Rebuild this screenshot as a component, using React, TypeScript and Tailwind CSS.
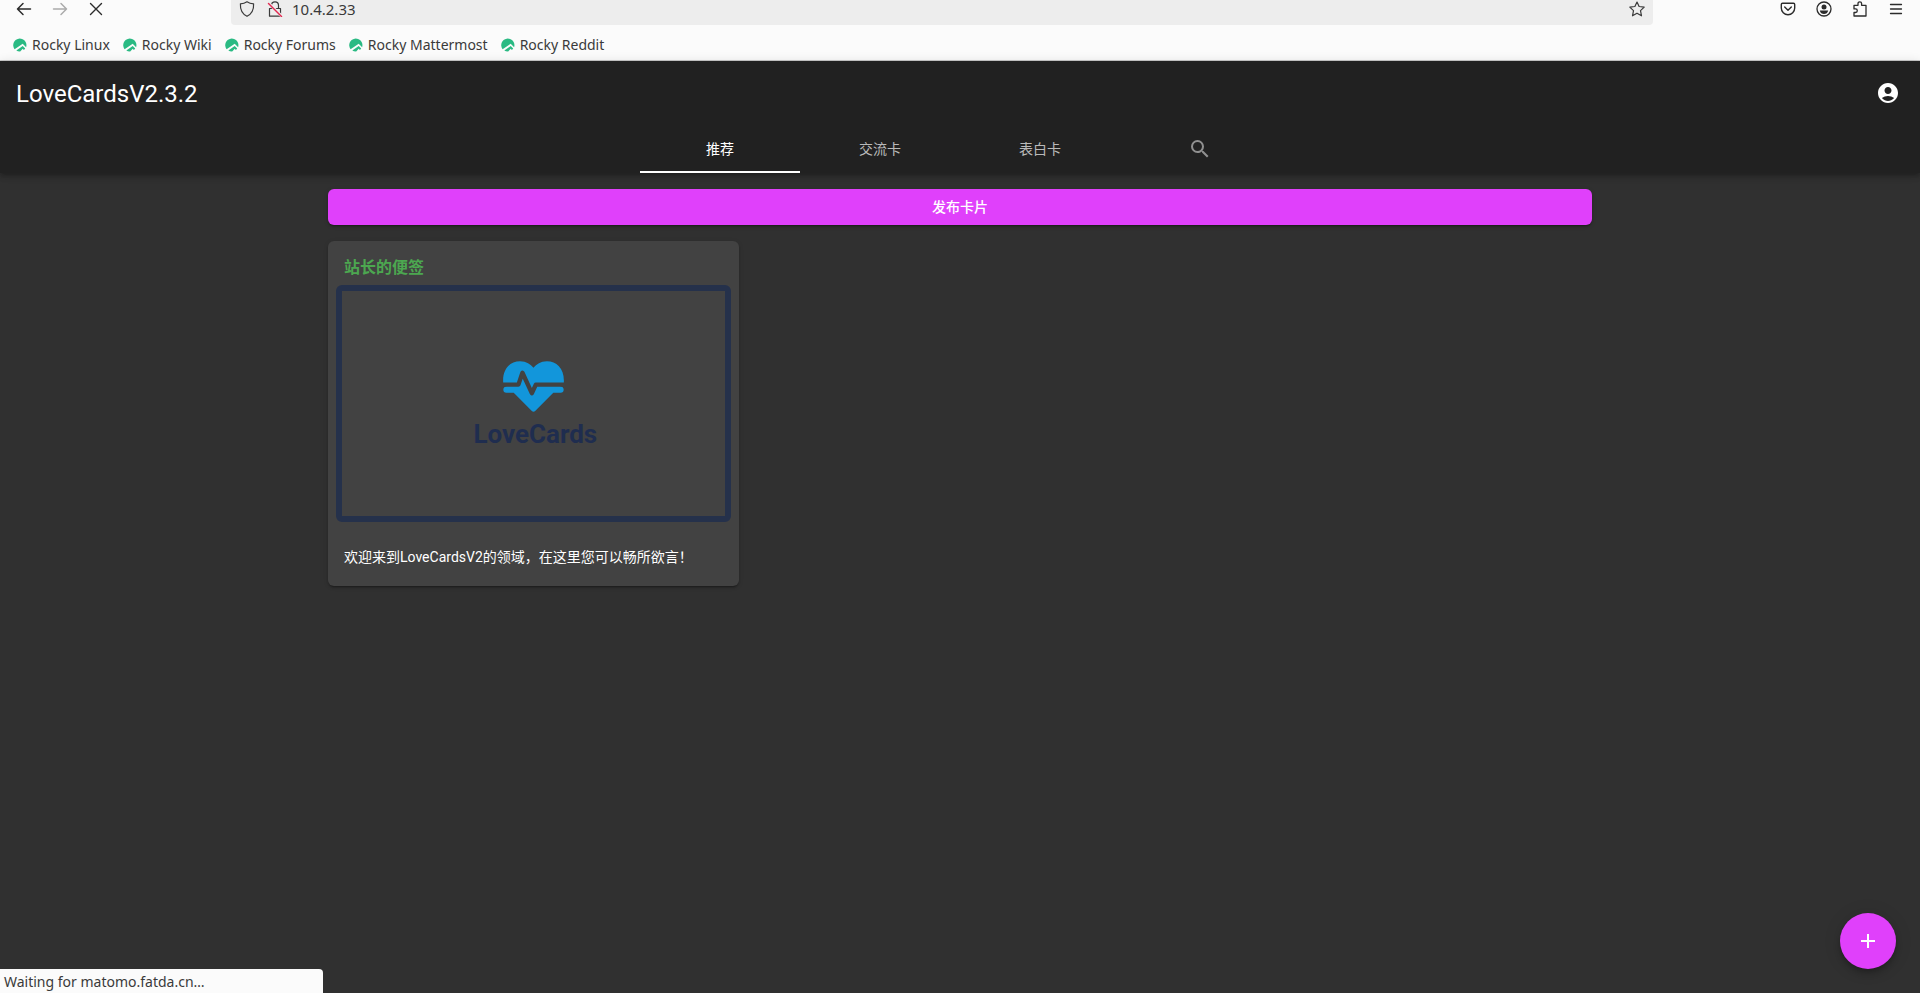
import type { ReactNode } from 'react';
import { MdAccountCircle, MdAdd, MdSearch } from 'react-icons/md';

function LineIcon({ children, className = '' }: { children: ReactNode; className?: string }) {
  return (
    <svg
      viewBox="0 0 16 16"
      className={`size-4 shrink-0 ${className}`}
      fill="none"
      stroke="currentColor"
      strokeWidth="1.2"
      strokeLinecap="round"
      strokeLinejoin="round"
      aria-hidden="true"
    >
      {children}
    </svg>
  );
}

function RockyIcon() {
  return (
    <svg viewBox="0 0 16 16" className="size-4 shrink-0" aria-hidden="true">
      <path
        fill="#2aba83"
        d="M2.6 12.2A6.6 6.6 0 1 1 14.1 10.2L10.7 6.8Z M4.3 13.6L10.7 8.9L13.2 11.6A6.6 6.6 0 0 1 11.9 13L10.7 11.8L8.2 14.5A6.6 6.6 0 0 1 4.3 13.6Z"
      />
    </svg>
  );
}

const bookmarks = ['Rocky Linux', 'Rocky Wiki', 'Rocky Forums', 'Rocky Mattermost', 'Rocky Reddit'];

function BrowserBar() {
  return (
    <div className="border-b border-[#cccccc] bg-[#fbfbfb] font-['Noto_Sans',sans-serif] text-sm leading-[18px] text-[#3a3a3a]">
      <div className="flex h-[25px] items-start">
        <div className="flex h-[18px] w-[231px] shrink-0 items-center gap-5 pl-4">
          <button type="button" aria-label="Back" className="text-[#2b2b2b]">
            <LineIcon>
              <path strokeWidth="1.5" d="M14.5 8H1.5M7 2.5L1.5 8L7 13.5" />
            </LineIcon>
          </button>
          <button type="button" aria-label="Forward" className="text-[#ababab]">
            <LineIcon>
              <path strokeWidth="1.5" d="M1.5 8H14.5M9 2.5L14.5 8L9 13.5" />
            </LineIcon>
          </button>
          <button type="button" aria-label="Stop" className="text-[#2b2b2b]">
            <LineIcon>
              <path strokeWidth="1.4" d="M2.5 2.5L13.5 13.5M13.5 2.5L2.5 13.5" />
            </LineIcon>
          </button>
        </div>
        <div className="h-[25px] min-w-0 flex-1 rounded-b bg-[#ededed] pr-2 pl-2">
          <div className="flex h-[18px] items-center">
            <LineIcon>
              <path d="M8 .8C10 2.2 12.2 2.8 14.6 2.9C14.9 9 12.8 13 8 15.3C3.2 13 1.1 9 1.4 2.9C3.8 2.8 6 2.2 8 .8Z" />
            </LineIcon>
            <LineIcon className="ml-3">
              <path d="M2.5 7.5H13.5V15.2H2.5ZM4.5 7.5V4.3A3.5 3.5 0 0 1 11.5 4.3V7.5" />
              <path stroke="#ededed" strokeWidth="3" d="M1.5 2L14.5 15" />
              <path stroke="#e22850" strokeWidth="1.4" d="M1.5 2.5L14.5 15.5" />
            </LineIcon>
            <input
              type="text"
              aria-label="Address"
              defaultValue="10.4.2.33"
              className="ml-[9px] h-[18px] min-w-0 flex-1 bg-transparent text-[15px] outline-none"
            />
            <button type="button" aria-label="Bookmark this page">
              <LineIcon>
                <path d="M8 1L10.1 5.5L15.2 6.1L11.5 9.6L12.5 14.8L8 12.2L3.5 14.8L4.5 9.6L.8 6.1L5.9 5.5Z" />
              </LineIcon>
            </button>
          </div>
        </div>
        <div className="flex h-[18px] w-[267px] shrink-0 items-center justify-end gap-5 pr-4 text-[#2b2b2b]">
          <button type="button" aria-label="Save to Pocket">
            <LineIcon>
              <path strokeWidth="1.4" d="M2.5 2.2H13.5Q14.7 2.2 14.7 3.4V7A6.7 6.7 0 0 1 1.3 7V3.4Q1.3 2.2 2.5 2.2ZM4.7 6L8 9.2L11.3 6" />
            </LineIcon>
          </button>
          <button type="button" aria-label="Account">
            <LineIcon>
              <circle cx="8" cy="8" r="7" strokeWidth="1.3" />
              <circle cx="8" cy="5.9" r="2.5" fill="currentColor" stroke="none" />
              <path fill="currentColor" stroke="none" d="M3.8 9.5H12.2C11.8 12 10 12.9 8 12.9S4.2 12 3.8 9.5Z" />
            </LineIcon>
          </button>
          <button type="button" aria-label="Extensions">
            <LineIcon>
              <path strokeWidth="1.3" d="M2 4.3H6V2.6A1.8 1.8 0 0 1 9.6 2.6V4.3H14V15H2V11.5H3.5A1.8 1.8 0 0 0 3.5 7.9H2Z" />
            </LineIcon>
          </button>
          <button type="button" aria-label="Menu">
            <LineIcon>
              <path strokeWidth="1.3" d="M2.5 3.5H13.5M2.5 8H13.5M2.5 12.5H13.5" />
            </LineIcon>
          </button>
        </div>
      </div>
      <nav className="flex h-[35px] items-center gap-3 pt-1 pl-3" aria-label="Bookmarks">
        {bookmarks.map((name) => (
          <a key={name} href="#" className="flex items-center gap-1">
            <RockyIcon />
            {name}
          </a>
        ))}
      </nav>
    </div>
  );
}

function AppHeader() {
  const tab = 'flex h-12 w-40 items-center justify-center border-b-2 pt-[2px] text-sm';
  return (
    <header className="bg-[#212121] shadow-[0_2px_4px_-1px_rgba(0,0,0,0.2),0_4px_5px_0_rgba(0,0,0,0.14),0_1px_10px_0_rgba(0,0,0,0.12)]">
      <div className="flex h-16 items-center justify-between px-4">
        <a href="#" className="pt-[2px] text-2xl">
          LoveCardsV2.3.2
        </a>
        <button type="button" aria-label="User" className="mr-1">
          <MdAccountCircle className="size-6" />
        </button>
      </div>
      <nav className="flex justify-center">
        <a href="#" className={`${tab} border-white`}>
          推荐
        </a>
        <a href="#" className={`${tab} border-transparent text-white/70`}>
          交流卡
        </a>
        <a href="#" className={`${tab} border-transparent text-white/70`}>
          表白卡
        </a>
        <a href="#" aria-label="搜索" className={`${tab} border-transparent text-white/50`}>
          <MdSearch className="size-6" />
        </a>
      </nav>
    </header>
  );
}

function LoveCardsPicture() {
  return (
    <div className="flex aspect-[5/3] flex-col items-center justify-center rounded-md border-6 border-[#25314b] pt-[2px]">
      <svg viewBox="0 0 182 152" className="h-[51px] w-[61px]" aria-hidden="true">
        <path
          fill="#1296db"
          d="M1 70C-4 25 20 1 51 1C70 1 82 10 91 20C100 10 112 1 131 1C162 1 186 25 181 70H1Z M10 70H172V76C178 76 181 81 181 86S178 95 172 95H150L96 149Q91 153 86 149L32 95H10C4 95 1 91 1 86S4 76 10 76Z"
        />
        <path
          fill="none"
          stroke="#424242"
          strokeWidth="13"
          strokeLinejoin="round"
          d="M0 70.5H46L58 35L86 96L98 70.5H182"
        />
      </svg>
      <p className="mt-2 pl-1 text-[26px] leading-7 font-bold text-[#1f2d4f]">LoveCards</p>
    </div>
  );
}

export default function App() {
  return (
    <div className="flex min-h-screen flex-col bg-[#303030] font-[Roboto,'Noto_Sans_CJK_SC',sans-serif] text-white">
      <BrowserBar />
      <AppHeader />
      <main className="mx-auto w-full max-w-7xl px-2 pt-4">
        <button
          type="button"
          className="flex h-9 w-full items-center justify-center rounded-md bg-[#e040fb] text-sm font-medium shadow-[0_3px_1px_-2px_rgba(0,0,0,0.2),0_2px_2px_0_rgba(0,0,0,0.14),0_1px_5px_0_rgba(0,0,0,0.12)]"
        >
          发布卡片
        </button>
        <div className="mt-4 grid grid-cols-3 gap-4">
          <article className="rounded-md bg-[#424242] pt-[14px] shadow-[0_3px_1px_-2px_rgba(0,0,0,0.2),0_2px_2px_0_rgba(0,0,0,0.14),0_1px_5px_0_rgba(0,0,0,0.12)]">
            <h2 className="px-4 text-base leading-[26px] font-bold text-[#4ca750]">站长的便签</h2>
            <div className="mt-1 px-2">
              <LoveCardsPicture />
            </div>
            <p className="px-4 pt-[25px] pb-[19px] text-sm">欢迎来到LoveCardsV2的领域，在这里您可以畅所欲言！</p>
          </article>
        </div>
      </main>
      <button
        type="button"
        aria-label="发布"
        className="fixed right-6 bottom-6 flex size-14 items-center justify-center rounded-full bg-[#e040fb] shadow-[0_3px_5px_-1px_rgba(0,0,0,0.2),0_6px_10px_0_rgba(0,0,0,0.14),0_1px_18px_0_rgba(0,0,0,0.12)]"
      >
        <MdAdd className="size-6" />
      </button>
      <div
        role="status"
        className="fixed bottom-0 left-0 h-6 w-[323px] rounded-tr bg-[#fbfbfb] pl-1 font-['Noto_Sans',sans-serif] text-sm leading-[26px] text-[#3a3a3a]"
      >
        Waiting for matomo.fatda.cn…
      </div>
    </div>
  );
}
